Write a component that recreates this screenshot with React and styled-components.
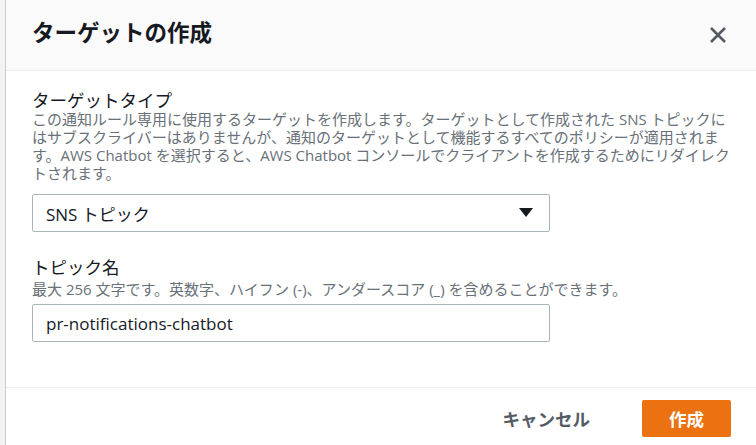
import React from 'react';
import styled, { createGlobalStyle } from 'styled-components';

const GlobalStyle = createGlobalStyle`
  html, body {
    margin: 0;
    padding: 0;
    background: #ffffff;
  }
  body {
    font-family: "Open Sans", "Noto Sans CJK JP", sans-serif;
    color: #16191f;
  }
`;

const Page = styled.div`
  display: flex;
  flex-direction: row;
  width: 756px;
  height: 445px;
  overflow: hidden;
`;

const Backdrop = styled.div`
  width: 5px;
  flex: none;
  background: #f2f3f3;
  border-right: 1px solid #c9cccd;
`;

const Modal = styled.div`
  flex: 1;
  display: flex;
  flex-direction: column;
  background: #ffffff;
`;

const Header = styled.div`
  display: flex;
  align-items: center;
  justify-content: space-between;
  height: 71px;
  padding: 0 26px 4px 26px;
  box-sizing: border-box;
  background: #fafafa;
  border-bottom: 1px solid #eaeded;
  flex: none;
`;

const Title = styled.h2`
  margin: 0;
  font-size: 22.5px;
  line-height: 28px;
  font-weight: 700;
  color: #16191f;
`;

const CloseButton = styled.button`
  display: flex;
  align-items: center;
  justify-content: center;
  width: 24px;
  height: 24px;
  padding: 0;
  margin: 4px 0 0 0;
  border: none;
  background: transparent;
  cursor: pointer;
`;

const Body = styled.div`
  flex: 1;
  display: flex;
  flex-direction: column;
  padding: 19px 26px 0 26px;
`;

const Field = styled.div`
  display: flex;
  flex-direction: column;
  margin-bottom: ${(p) => p.$gap}px;
`;

const Label = styled.div`
  font-size: 17.5px;
  line-height: 20px;
  color: #16191f;
`;

const Description = styled.div`
  font-size: 15px;
  line-height: 18px;
  color: #687078;
  margin-top: ${(p) => p.$offset}px;
  margin-bottom: ${(p) => p.$after}px;
  width: 698px;
`;

const SelectBox = styled.div`
  display: flex;
  align-items: center;
  justify-content: space-between;
  width: 518px;
  height: 38px;
  box-sizing: border-box;
  padding: 0 16px 0 13px;
  border: 1px solid #aab7b8;
  border-radius: 2px;
  font-size: 17px;
  color: #16191f;
`;

const TextInput = styled.input`
  width: 518px;
  height: 38px;
  box-sizing: border-box;
  padding: 0 13px;
  border: 1px solid #aab7b8;
  border-radius: 2px;
  font-family: "Open Sans", "Noto Sans CJK JP", sans-serif;
  font-size: 17px;
  color: #16191f;
  outline: none;
`;

const Footer = styled.div`
  display: flex;
  align-items: flex-start;
  justify-content: flex-end;
  gap: 32px;
  height: 58px;
  box-sizing: border-box;
  padding: 12px 25px 0 0;
  border-top: 1px solid #eaeded;
  flex: none;
`;

const Button = styled.button`
  height: 37px;
  padding: 0 ${(p) => (p.$primary ? 27 : 20)}px;
  border: none;
  border-radius: 2px;
  font-family: "Open Sans", "Noto Sans CJK JP", sans-serif;
  font-size: 17.5px;
  font-weight: 700;
  color: ${(p) => (p.$primary ? '#ffffff' : '#545b64')};
  background: ${(p) => (p.$primary ? '#ec7211' : 'transparent')};
  cursor: pointer;
`;

const CloseIcon = () => (
  <svg width="18" height="18" viewBox="0 0 18 18">
    <path d="M2 2 L16 16 M16 2 L2 16" stroke="#545b64" strokeWidth="2.6" fill="none" />
  </svg>
);

const CaretIcon = () => (
  <svg width="14" height="10" viewBox="0 0 14 10">
    <path d="M0 0 L14 0 L7 9 Z" fill="#16191f" />
  </svg>
);

export default function App() {
  return (
    <Page>
      <GlobalStyle />
      <Backdrop />
      <Modal>
        <Header>
          <Title>ターゲットの作成</Title>
          <CloseButton aria-label="閉じる">
            <CloseIcon />
          </CloseButton>
        </Header>
        <Body>
          <Field $gap={25}>
            <Label>ターゲットタイプ</Label>
            <Description $offset={0} $after={12}>
              この通知ルール専用に使用するターゲットを作成します。ターゲットとして作成された SNS トピックにはサブスクライバーはありませんが、通知のターゲットとして機能するすべてのポリシーが適用されます。AWS Chatbot を選択すると、AWS Chatbot コンソールでクライアントを作成するためにリダイレクトされます。
            </Description>
            <SelectBox>
              <span>SNS トピック</span>
              <CaretIcon />
            </SelectBox>
          </Field>
          <Field $gap={0}>
            <Label>トピック名</Label>
            <Description $offset={3} $after={6}>
              最大 256 文字です。英数字、ハイフン (-)、アンダースコア (_) を含めることができます。
            </Description>
            <TextInput defaultValue="pr-notifications-chatbot" />
          </Field>
        </Body>
        <Footer>
          <Button>キャンセル</Button>
          <Button $primary>作成</Button>
        </Footer>
      </Modal>
    </Page>
  );
}
